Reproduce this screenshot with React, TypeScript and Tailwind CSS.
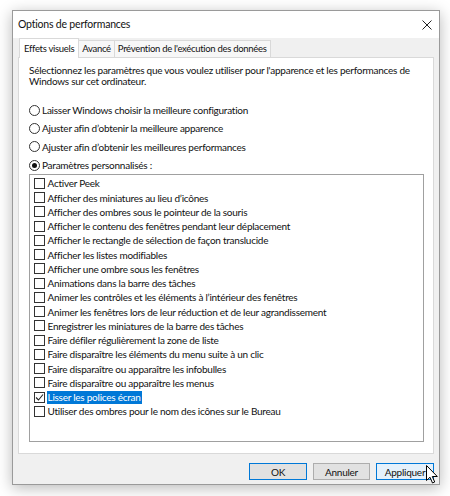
import React from "react";

const items = [
  "Activer Peek",
  "Afficher des miniatures au lieu d\u2019icônes",
  "Afficher des ombres sous le pointeur de la souris",
  "Afficher le contenu des fenêtres pendant leur déplacement",
  "Afficher le rectangle de sélection de façon translucide",
  "Afficher les listes modifiables",
  "Afficher une ombre sous les fenêtres",
  "Animations dans la barre des tâches",
  "Animer les contrôles et les éléments à l\u2019intérieur des fenêtres",
  "Animer les fenêtres lors de leur réduction et de leur agrandissement",
  "Enregistrer les miniatures de la barre des tâches",
  "Faire défiler régulièrement la zone de liste",
  "Faire disparaître les éléments du menu suite à un clic",
  "Faire disparaître ou apparaître les infobulles",
  "Faire disparaître ou apparaître les menus",
  "Lisser les polices écran",
  "Utiliser des ombres pour le nom des icônes sur le Bureau",
];

const radios = [
  "Laisser Windows choisir la meilleure configuration",
  "Ajuster afin d\u2019obtenir la meilleure apparence",
  "Ajuster afin d\u2019obtenir les meilleures performances",
  "Paramètres personnalisés :",
];

function Radio({ checked }: { checked?: boolean }) {
  return (
    <span className="w-[11px] h-[11px] rounded-full border border-[#333] bg-white flex items-center justify-center shrink-0">
      {checked && <span className="w-[5px] h-[5px] rounded-full bg-[#111]" />}
    </span>
  );
}

function Check({ checked }: { checked?: boolean }) {
  return (
    <span className="w-[11px] h-[11px] border border-[#333] bg-white flex items-center justify-center shrink-0">
      {checked && (
        <svg width="9" height="9" viewBox="0 0 9 9">
          <path d="M1 4.5 L3.5 7 L8 1.5" fill="none" stroke="#222" strokeWidth="1.1" />
        </svg>
      )}
    </span>
  );
}

export default function App() {
  return (
    <div
      className="w-[450px] h-[496px] bg-white relative pt-[10px] pl-[12px] overflow-hidden text-[#111] tracking-[-0.25px]"
      style={{ fontFamily: "Lato, 'Noto Sans', sans-serif" }}
    >
      <div className="w-[428px] h-[475px] border border-[#9a9a9a] bg-[#f0f0f0] flex flex-col shadow-[0_3px_14px_rgba(0,0,0,0.28)]">
        {/* Title bar */}
        <div className="h-[27px] bg-white flex items-center justify-between pl-[5px] pr-[7px] shrink-0">
          <span className="text-[10.5px] leading-none tracking-[-0.2px] whitespace-nowrap">Options de performances</span>
          <svg width="10" height="10" viewBox="0 0 10 10">
            <path d="M0.5 0.5 L9.5 9.5 M9.5 0.5 L0.5 9.5" stroke="#222" strokeWidth="1" />
          </svg>
        </div>
        {/* Tabs */}
        <div className="px-[5px] flex flex-col">
          <div className="flex items-end h-[19px] text-[9.5px] leading-none whitespace-nowrap tracking-[-0.3px] pl-px">
            <div className="h-[20px] -mb-px relative z-10 bg-white border border-b-0 border-[#d9d9d9] flex items-center px-[4px]">
              Effets visuels
            </div>
            <div className="h-[17px] bg-[#f7f7f7] border border-l-0 border-b-0 border-[#d9d9d9] flex items-center px-[3px]">
              Avancé
            </div>
            <div className="h-[17px] bg-[#f7f7f7] border border-l-0 border-b-0 border-[#d9d9d9] flex items-center px-[3px]">
              Prévention de l'exécution des données
            </div>
          </div>
          {/* Panel */}
          <div className="h-[397px] bg-white border border-[#d9d9d9] pl-[10px] pr-[9px] pt-[7px] text-[10px]">
            <p className="leading-[11px] whitespace-nowrap">
              Sélectionnez les paramètres que vous voulez utiliser pour l'apparence et les performances de
              <br />
              Windows sur cet ordinateur.
            </p>
            <div className="mt-[14px] flex flex-col">
              {radios.map((r, i) => (
                <div key={r} className="h-[18.33px] flex items-center gap-[2px] whitespace-nowrap">
                  <Radio checked={i === 3} />
                  <span className="leading-none">{r}</span>
                </div>
              ))}
            </div>
            <div className="h-[268px] border border-[#a0a0a0] pt-[1px] pl-[4px]">
              {items.map((it, i) => (
                <div key={it} className="h-[14.25px] flex items-center whitespace-nowrap">
                  <Check checked={i === 15} />
                  <span
                    className={
                      "ml-[1.5px] h-[13px] flex items-center px-[1px] leading-none " +
                      (i === 15 ? "bg-[#0078d7] text-white" : "")
                    }
                  >
                    {it}
                  </span>
                </div>
              ))}
            </div>
          </div>
        </div>
        {/* Buttons */}
        <div className="flex justify-end gap-[6px] pr-[5px] mt-[9px] text-[10px]">
          <button className="w-[58px] h-[17px] bg-[#e1e1e1] border border-[#0078d7] flex items-center justify-center leading-none">
            OK
          </button>
          <button className="w-[57px] h-[17px] bg-[#e1e1e1] border border-[#adadad] flex items-center justify-center leading-none">
            Annuler
          </button>
          <button className="w-[58px] h-[17px] bg-[#e5f1fb] border border-[#0078d7] flex items-center justify-center leading-none">
            Appliquer
          </button>
        </div>
      </div>
      {/* Cursor */}
      <svg className="absolute left-[426px] top-[465px]" width="13" height="19" viewBox="0 0 13 19">
        <path
          d="M0.5 0.5 L0.5 15.5 L4 12.2 L6.5 18 L8.7 17 L6.3 11.5 L11.3 11.5 Z"
          fill="white"
          stroke="black"
          strokeWidth="1"
          strokeLinejoin="miter"
        />
      </svg>
    </div>
  );
}
